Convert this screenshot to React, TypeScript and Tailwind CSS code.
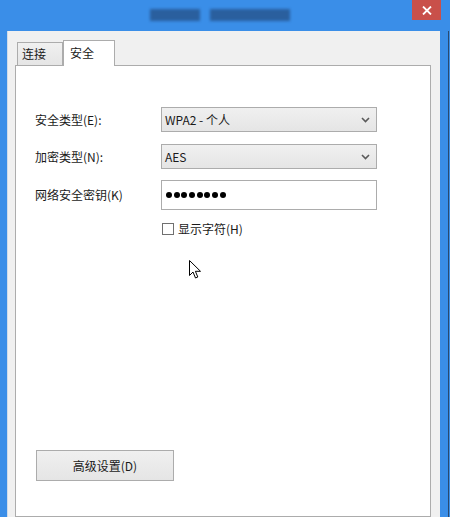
const font = { fontFamily: '"Noto Sans CJK SC", "Noto Sans", sans-serif' };

const Combo = ({ value }: { value: string }) => (
  <div className="h-[25px] w-[216px] border border-[#acacac] bg-gradient-to-b from-[#f0f0f0] to-[#e5e5e5] flex items-center pl-[3px] pr-[6px]">
    <span className="flex-1 text-[12px] text-[#1a1a1a] leading-none">{value}</span>
    <svg width="9" height="6" viewBox="0 0 9 6">
      <path d="M1 1 L4.5 4.5 L8 1" fill="none" stroke="#5a5a5a" strokeWidth="1.6" />
    </svg>
  </div>
);

const App = () => {
  return (
    <div className="w-[450px] h-[517px] bg-[#3a8ee8] flex flex-col overflow-hidden relative" style={font}>
      <div className="h-[31px] shrink-0 relative flex justify-center items-start pt-[9px] gap-[10px] pr-[10px]">
        <div className="w-[50px] h-[12px] bg-[#2a5f9e] blur-[1.5px]" />
        <div className="w-[80px] h-[12px] bg-[#2a5f9e] blur-[1.5px]" />
        <button className="absolute right-[9px] top-0 w-[29px] h-[20px] bg-[#c9504a] flex items-center justify-center">
          <svg width="10" height="9" viewBox="0 0 10 9">
            <path d="M1 0.5 L9 8.5 M9 0.5 L1 8.5" stroke="#ffffff" strokeWidth="1.8" />
          </svg>
        </button>
      </div>
      <div className="flex-1 flex pl-[7px] pr-[1px]">
        <div className="flex-1 flex border-l border-[#cfdcea] bg-[#f0f0f0] pt-[9px] pl-[7px] pr-[9px] flex-col">
          <div className="flex items-end h-[25px] ml-[2px] relative z-10">
            <div className="w-[46px] h-[23px] border border-[#acacac] border-b-0 bg-gradient-to-b from-[#f0f0f0] to-[#e5e5e5] text-[12px] text-[#1a1a1a] flex items-center pl-[4px]">
              连接
            </div>
            <div className="w-[52px] h-[26px] -mb-px border border-[#acacac] border-b-0 bg-white text-[12px] text-[#1a1a1a] flex items-center pl-[6px] pb-[2px]">
              安全
            </div>
          </div>
          <div className="flex-1 border border-[#acacac] bg-white pl-[19px] pt-[41px] text-[12px] text-[#1a1a1a]">
            <div className="grid grid-cols-[126px_216px] items-center">
              <span>安全类型(E):</span>
              <Combo value="WPA2 - 个人" />
              <span className="mt-[12px]">加密类型(N):</span>
              <div className="mt-[12px]"><Combo value="AES" /></div>
              <span className="mt-[11px]">网络安全密钥(K)</span>
              <div className="mt-[11px] h-[30px] w-[216px] border border-[#acacac] bg-white flex items-center pl-[4px] gap-[1.7px]">
                {Array.from({ length: 8 }).map((_, i) => (
                  <div key={i} className="w-[6px] h-[6px] rounded-full bg-black" />
                ))}
              </div>
              <span />
              <label className="mt-[10px] flex items-center gap-[4px] pl-[1px]">
                <span className="w-[12px] h-[12px] border border-[#707070] bg-white" />
                <span>显示字符(H)</span>
              </label>
            </div>
            <div className="relative">
              <svg className="absolute left-[154px] top-[22px]" width="13" height="20" viewBox="0 0 13 20">
                <path d="M0.5 0.5 L0.5 15.5 L4 12 L6.5 18 L8.8 17 L6.4 11.3 L11.5 11.3 Z" fill="#ffffff" stroke="#000000" strokeWidth="1" strokeLinejoin="miter" />
              </svg>
            </div>
            <button className="mt-[212px] ml-[1px] w-[138px] h-[31px] border border-[#acacac] bg-gradient-to-b from-[#f0f0f0] to-[#e5e5e5] text-[12px] text-[#1a1a1a] flex items-center justify-center">
              高级设置(D)
            </button>
          </div>
        </div>
        <div className="w-[8px] bg-[#3a8ee8]" />
        <div className="w-[1px] bg-[#2a4a70]" />
      </div>
    </div>
  );
};

export default App;
